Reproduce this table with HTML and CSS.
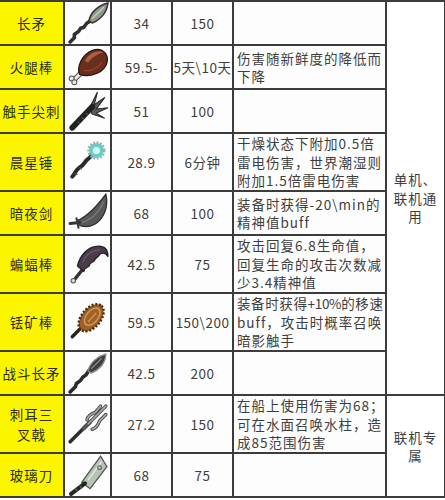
FILE: index.html
```html
<!DOCTYPE html>
<html lang="zh-CN">
<head>
<meta charset="utf-8">
<title>武器表</title>
<link rel="stylesheet" href="styles.css">
</head>
<body>
<table class="sheet">
  <colgroup>
    <col class="c-name"><col class="c-icon"><col class="c-num"><col class="c-num"><col class="c-desc"><col class="c-scope">
  </colgroup>
  <tbody>
    <tr class="r1">
      <td class="name">长矛</td>
      <td class="icon"><svg class="ic" viewBox="0 0 40 40">
        <path d="M3 38 L7 34 L7 31 L11 28 L13 25 L16 24 L19 20 L21 19 L24 15" stroke="#2f2f2f" stroke-width="3.4" fill="none" stroke-linecap="round" stroke-linejoin="round"/>
        <path d="M21 18 C22 10 30 3 39 1 C38 10 32 17 24 20 Z" fill="#8e9a8a" stroke="#333" stroke-width="1.4"/>
        <path d="M24 16 L35 5" stroke="#c9d2c4" stroke-width="1.2"/>
      </svg></td>
      <td class="num">34</td>
      <td class="num">150</td>
      <td class="desc"></td>
      <td class="scope" rowspan="8">单机、<br>联机通<br>用</td>
    </tr>
    <tr class="r1">
      <td class="name">火腿棒</td>
      <td class="icon"><svg class="ic" viewBox="0 0 40 40">
        <path d="M7 32 L15 24" stroke="#555" stroke-width="5" stroke-linecap="round"/>
        <path d="M7 32 L15 24" stroke="#ebe7df" stroke-width="3" stroke-linecap="round"/>
        <circle cx="4.5" cy="31" r="2.4" fill="#ebe7df" stroke="#555" stroke-width="1"/>
        <circle cx="7" cy="34.5" r="2.4" fill="#ebe7df" stroke="#555" stroke-width="1"/>
        <path d="M12 27 C9 20 14 8 25 4 C34 1 40 8 38 16 C36 24 24 31 12 27 Z" fill="#6a2e1c" stroke="#24120c" stroke-width="1.2"/>
        <path d="M17 14 C21 7 29 3 35 6 C31 7 24 10 20 16 Z" fill="#a9604a"/>
        <path d="M16 23 C22 25 29 21 33 16" stroke="#8d4630" stroke-width="1.2" fill="none"/>
      </svg></td>
      <td class="num">59.5-</td>
      <td class="num">5天\10天</td>
      <td class="desc">伤害随新鲜度的降低而<br>下降</td>
    </tr>
    <tr class="r1">
      <td class="name">触手尖刺</td>
      <td class="icon"><svg class="ic" viewBox="0 0 40 40">
        <path d="M21 18 L29 2 L26 14 L36 7 L28 18 L39 17 L28 22 L36 27 L24 23 Z" fill="#5a5a5a" stroke="#2a2a2a" stroke-width="1"/>
        <path d="M5 36 L24 16" stroke="#222" stroke-width="5.5" stroke-linecap="round"/>
        <path d="M10 30 L12 32 M14 26 L16 28 M18 22 L20 24" stroke="#555" stroke-width="1"/>
      </svg></td>
      <td class="num">51</td>
      <td class="num">100</td>
      <td class="desc"></td>
    </tr>
    <tr class="r2">
      <td class="name">晨星锤</td>
      <td class="icon"><svg class="ic" viewBox="0 0 40 40">
        <path d="M5 34 C8 31 8 28 11 26 C15 24 16 22 18 19 C20 17 22 16 24 13" stroke="#2a2a2a" stroke-width="3.8" fill="none" stroke-linecap="round"/>
        <path d="M7 31 L10 32 M12 25 L14 27" stroke="#555" stroke-width="1.2"/>
        <circle cx="28" cy="9" r="7" fill="#5fd4cb" stroke="#8fb3b0" stroke-width="3.4" stroke-dasharray="1.6 1.4"/>
        <circle cx="28" cy="9" r="3.4" fill="#d8faf6"/>
      </svg></td>
      <td class="num">28.9</td>
      <td class="num">6分钟</td>
      <td class="desc">干燥状态下附加0.5倍<br>雷电伤害，世界潮湿则<br>附加1.5倍雷电伤害</td>
    </tr>
    <tr class="r1">
      <td class="name">暗夜剑</td>
      <td class="icon"><svg class="ic" viewBox="0 0 40 40">
        <path d="M10 27 C18 24 28 14 37 2 C40 14 35 26 26 31 C20 34 14 33 10 31 Z" fill="#585858" stroke="#2e2e2e" stroke-width="1.2"/>
        <path d="M14 29 C22 27 30 20 35 9" stroke="#7c7c7c" stroke-width="1.2" fill="none"/>
        <path d="M3 30 L12 29" stroke="#333" stroke-width="3" stroke-linecap="round"/>
        <path d="M9 25 L11 34" stroke="#3c3c3c" stroke-width="2" stroke-linecap="round"/>
      </svg></td>
      <td class="num">68</td>
      <td class="num">100</td>
      <td class="desc">装备时获得-20\min的<br>精神值buff</td>
    </tr>
    <tr class="r2">
      <td class="name">蝙蝠棒</td>
      <td class="icon"><svg class="ic" viewBox="0 0 40 40">
        <path d="M15 25 L7 35" stroke="#3a3036" stroke-width="3.4" stroke-linecap="round"/>
        <circle cx="6" cy="36" r="2.1" fill="#ddd" stroke="#555" stroke-width="1"/>
        <path d="M10 22 C12 12 20 3 30 3 C36 3 39 7 39 13 C37 9 33 9 31 11 C30 14 27 13 26 17 C24 19 22 18 21 22 C19 24 17 23 16 27 Z" fill="#4a3b49" stroke="#231b22" stroke-width="1.2"/>
        <path d="M15 18 C18 11 24 7 31 6" stroke="#6d5a6b" stroke-width="1.2" fill="none"/>
      </svg></td>
      <td class="num">42.5</td>
      <td class="num">75</td>
      <td class="desc">攻击回复6.8生命值，<br>回复生命的攻击次数减<br>少3.4精神值</td>
    </tr>
    <tr class="r2">
      <td class="name">铥矿棒</td>
      <td class="icon"><svg class="ic" viewBox="0 0 40 40">
        <path d="M5 34 L14 25" stroke="#2e2218" stroke-width="3.2" stroke-linecap="round"/>
        <ellipse cx="23" cy="16" rx="15" ry="9" transform="rotate(-50 23 16)" fill="#a0602a" stroke="#4a2c12" stroke-width="2.4" stroke-dasharray="2 1.5"/>
        <ellipse cx="24" cy="15" rx="9.5" ry="5.5" transform="rotate(-50 24 15)" fill="none" stroke="#d49a58" stroke-width="1.3"/>
        <path d="M20 20 L28 11" stroke="#d49a58" stroke-width="1.1"/>
      </svg></td>
      <td class="num">59.5</td>
      <td class="num">150\200</td>
      <td class="desc"><span class="fit">装备时获得<span class="lat">+10%</span>的移速</span><br>buff，攻击时概率召唤<br>暗影触手</td>
    </tr>
    <tr class="r1">
      <td class="name">战斗长矛</td>
      <td class="icon"><svg class="ic" viewBox="0 0 40 40">
        <path d="M3 38 L8 33 L9 30 L13 27 L15 24 L18 22 L22 16" stroke="#2a2a2a" stroke-width="3.4" fill="none" stroke-linecap="round" stroke-linejoin="round"/>
        <path d="M20 18 C22 10 29 4 37 2 C37 10 31 17 23 20 Z" fill="#3c3c3c" stroke="#8a8a8a" stroke-width="1.3"/>
        <path d="M23 16 L33 6" stroke="#9a9a9a" stroke-width="1"/>
      </svg></td>
      <td class="num">42.5</td>
      <td class="num">200</td>
      <td class="desc"></td>
    </tr>
    <tr class="r2">
      <td class="name">刺耳三<br>叉戟</td>
      <td class="icon"><svg class="ic" viewBox="0 0 40 40">
        <path d="M3 37 L18 22" stroke="#2e2e2e" stroke-width="3.4" stroke-linecap="round"/>
        <path d="M16 24 L22 18" stroke="#555" stroke-width="4" stroke-linecap="round"/>
        <path d="M20 20 L37 3 M19 16 C20 12 24 10 27 9 L32 3 M24 25 C28 24 30 20 31 17 L37 11" stroke="#444" stroke-width="3.2" fill="none" stroke-linecap="round"/>
        <path d="M20 20 L37 3 M19 16 C20 12 24 10 27 9 L32 3 M24 25 C28 24 30 20 31 17 L37 11" stroke="#a9aca8" stroke-width="1.6" fill="none" stroke-linecap="round"/>
      </svg></td>
      <td class="num">27.2</td>
      <td class="num">150</td>
      <td class="desc">在船上使用伤害为68；<br>可在水面召唤水柱，造<br>成85范围伤害</td>
      <td class="scope" rowspan="2">联机专<br>属</td>
    </tr>
    <tr class="r1">
      <td class="name">玻璃刀</td>
      <td class="icon"><svg class="ic" viewBox="0 0 40 40">
        <path d="M14 27 L32 2 L38 12 L22 33 Z" fill="#b9c2b6" stroke="#555" stroke-width="1.2"/>
        <path d="M20 25 L33 7" stroke="#e3e9e0" stroke-width="1.3"/>
        <circle cx="31" cy="13" r="1.8" fill="none" stroke="#555" stroke-width="1"/>
        <path d="M4 38 L17 28" stroke="#262626" stroke-width="4" stroke-linecap="round"/>
        <path d="M8 33 L10 36 M12 30 L14 33" stroke="#666" stroke-width="1"/>
      </svg></td>
      <td class="num">68</td>
      <td class="num">75</td>
      <td class="desc"></td>
    </tr>
  </tbody>
</table>
</body>
</html>
```

FILE: styles.css
```css
html, body {
  margin: 0;
  padding: 0;
  background: #ffffff;
}

body {
  font-family: "Noto Sans CJK SC", "Noto Sans", sans-serif;
  color: #3e3e3e;
}

.sheet {
  border-collapse: collapse;
  table-layout: fixed;
  width: 445px;
  font-size: 13.5px;
}

.c-name { width: 64px; }
.c-icon { width: 47px; }
.c-num { width: 61px; }
.c-desc { width: 153px; }
.c-scope { width: 59px; }

.sheet td {
  border: 2px solid #3c3c3c;
  padding: 0;
  text-align: center;
  vertical-align: middle;
  overflow: hidden;
  white-space: nowrap;
  background: #fdfdfd;
}

.r1 { height: 44px; }
.r2 { height: 58px; }

.sheet .name {
  background: #fbf500;
  color: #2e2e1a;
  letter-spacing: 1px;
  line-height: 20px;
  border-left: none;
}

.sheet .icon {
  line-height: 0;
}

.ic {
  width: 42px;
  height: 42px;
}

.num {
  letter-spacing: 0.5px;
}

.sheet .desc {
  text-align: left;
  padding-left: 3px;
  line-height: 18.5px;
  letter-spacing: 1px;
}

.fit {
  letter-spacing: 0.6px;
}

.lat {
  letter-spacing: -0.3px;
}

.sheet .scope {
  background: #ffffff;
  line-height: 18.5px;
  letter-spacing: 1px;
}
```
